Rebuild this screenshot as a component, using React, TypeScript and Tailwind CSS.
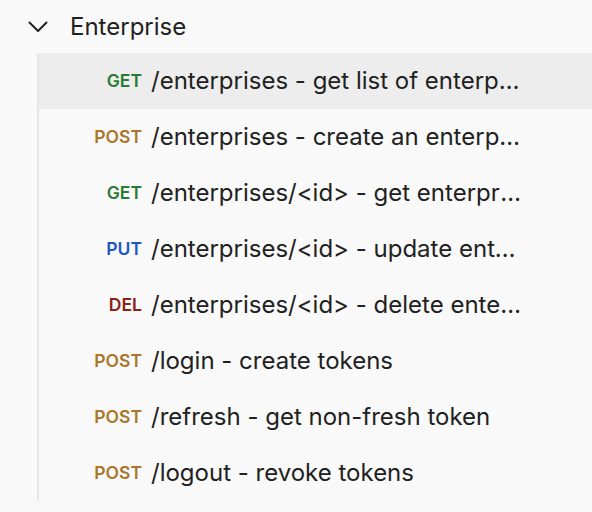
type Method = "GET" | "POST" | "PUT" | "DEL";

const METHOD_COLORS: Record<Method, string> = {
  GET: "text-[#2b7a32]",
  POST: "text-[#a8772a]",
  PUT: "text-[#1c58c2]",
  DEL: "text-[#8b2218]",
};

const ROUTES: Array<{ method: Method; label: string; active?: boolean }> = [
  { method: "GET", label: "/enterprises - get list of enterprises", active: true },
  { method: "POST", label: "/enterprises - create an enterprise" },
  { method: "GET", label: "/enterprises/<id> - get enterprise" },
  { method: "PUT", label: "/enterprises/<id> - update enterprise" },
  { method: "DEL", label: "/enterprises/<id> - delete enterprise" },
  { method: "POST", label: "/login - create tokens" },
  { method: "POST", label: "/refresh - get non-fresh token" },
  { method: "POST", label: "/logout - revoke tokens" },
];

export default function App() {
  return (
    <div
      className="h-[512px] w-[592px] overflow-hidden bg-[#f9f9f9] text-[#212121]"
      style={{ fontFamily: "Inter, 'Noto Sans', sans-serif" }}
    >
      <div className="flex h-[53px] items-center pl-[28px]">
        {/* chevron, drawn to match the 18px-wide caret */}
        <svg width="20" height="12" viewBox="0 0 20 12" fill="none" className="mt-[1px]">
          <path d="M1.5 1.5 10 10l8.5-8.5" stroke="#212121" strokeWidth="2" strokeLinecap="round" strokeLinejoin="round" />
        </svg>
        <span className="ml-[22px] text-[24px]">Enterprise</span>
      </div>

      <div className="ml-[37px] border-l-2 border-[#e6e6e6]">
        {ROUTES.map((r, i) => (
          <div
            key={i}
            className={`flex h-[56px] items-center pr-[67px] ${r.active ? "bg-[#ededed]" : ""}`}
          >
            <span
              className={`w-[103px] shrink-0 text-right text-[17.5px] font-semibold ${METHOD_COLORS[r.method]}`}
            >
              {r.method}
            </span>
            <span className="ml-[9px] min-w-0 truncate text-[24px]">{r.label}</span>
          </div>
        ))}
      </div>
    </div>
  );
}
